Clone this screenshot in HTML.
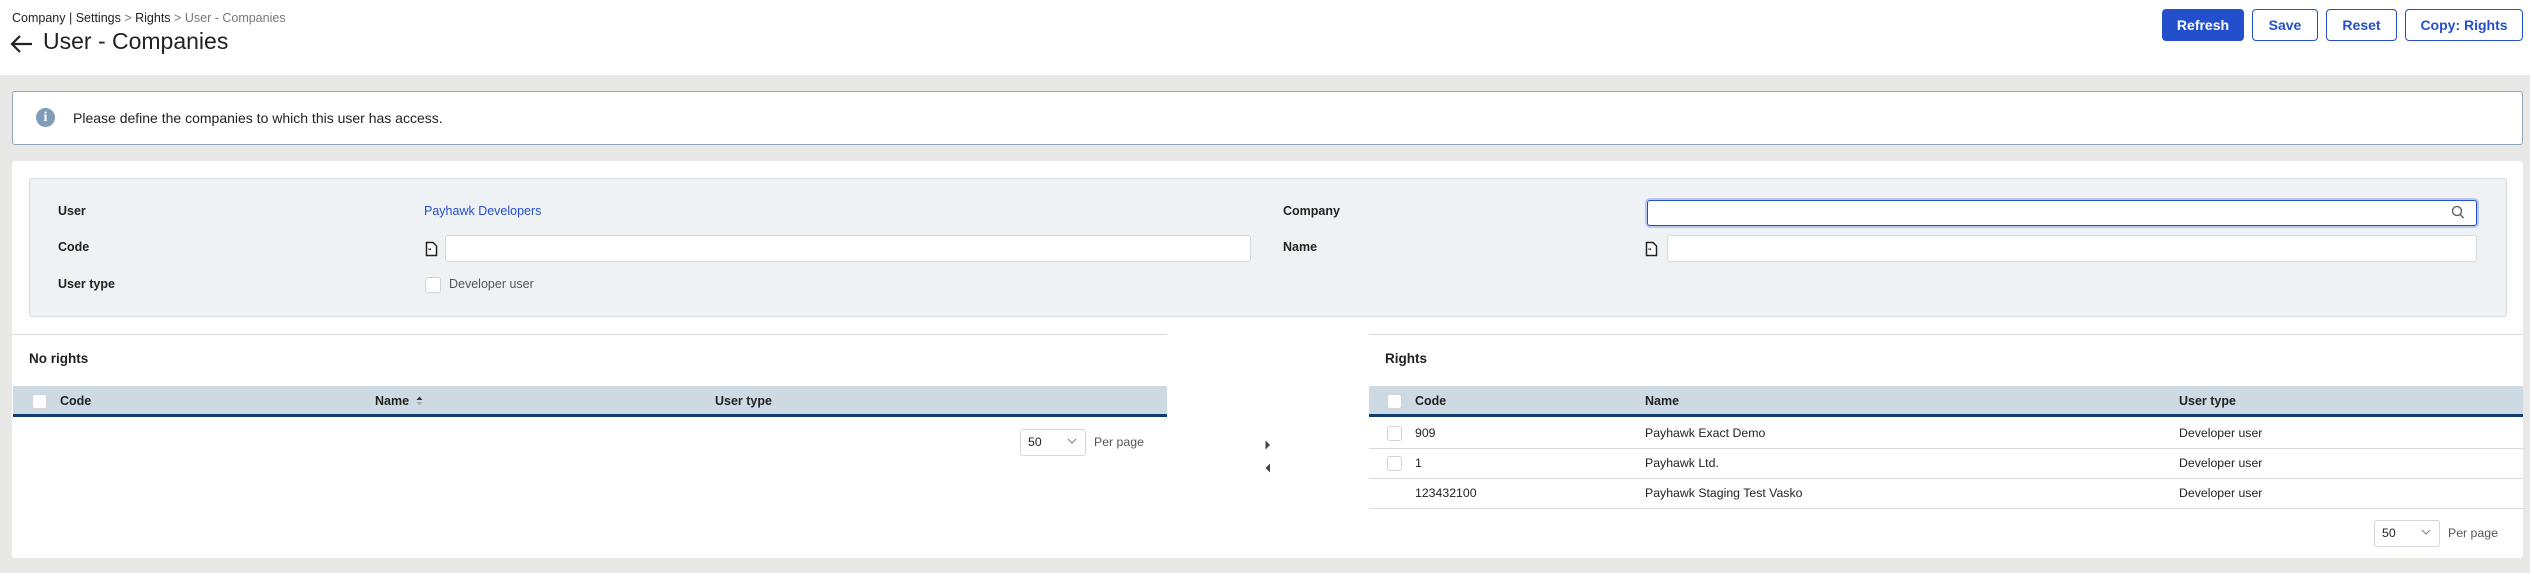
<!DOCTYPE html>
<html><head><meta charset="utf-8">
<style>
*{box-sizing:border-box;margin:0;padding:0}
body{width:2530px;height:573px;overflow:hidden;background:#e8e8e6;font-family:"Liberation Sans",sans-serif;color:#222;position:relative}
.a{position:absolute}
.hdr{left:0;top:0;width:2530px;height:75px;background:#fff}
.btn{position:absolute;top:9px;height:32px;border:1.5px solid #234fcc;border-radius:4px;color:#234fcc;font-size:14px;font-weight:bold;display:flex;align-items:center;justify-content:center;background:#fff}
.lbl{font-size:12.5px;font-weight:bold;color:#222}
.inp{position:absolute;background:#fff;border:1px solid #d3d8dc;border-radius:3px}
.cb{position:absolute;width:15px;height:15px;background:#fff;border:1px solid #cfd4d8;border-radius:3px}
.th{position:absolute;font-size:12.5px;font-weight:bold;color:#222}
.td{position:absolute;font-size:12.3px;color:#222}
.row{position:absolute;height:1px;background:#d6d9dc}
</style></head><body>
<div class="a hdr"></div>
<div class="a" style="left:12px;top:11px;font-size:12.5px;color:#222">Company | Settings <span style="color:#777">&gt;</span> Rights <span style="color:#777">&gt;</span> <span style="color:#777">User - Companies</span></div>
<svg class="a" style="left:10px;top:34px" width="24" height="20" viewBox="0 0 24 20"><path d="M22 10H3M10 2L2 10l8 8" fill="none" stroke="#222" stroke-width="2.2"/></svg>
<div class="a" style="left:43px;top:28px;font-size:23px;color:#222">User - Companies</div>
<div class="btn" style="left:2162px;width:82px;background:#234fcc;color:#fff">Refresh</div>
<div class="btn" style="left:2252px;width:66px">Save</div>
<div class="btn" style="left:2326px;width:71px">Reset</div>
<div class="btn" style="left:2405px;width:118px">Copy: Rights</div>

<div class="a" style="left:12px;top:91px;width:2511px;height:54px;background:#fff;border:1px solid #8fa6bb;border-radius:3px"></div>
<div class="a" style="left:36px;top:108px;width:19px;height:19px;border-radius:50%;background:#7f9cb8;color:#fff;font-weight:bold;font-size:14px;text-align:center;line-height:19px;font-family:'Liberation Serif',serif">i</div>
<div class="a" style="left:73px;top:110px;font-size:14px">Please define the companies to which this user has access.</div>

<div class="a" style="left:12px;top:161px;width:2511px;height:397px;background:#fff;border-radius:3px"></div>
<div class="a" style="left:29px;top:178px;width:2478px;height:139px;background:#eef2f5;border:1px solid #d8dde1;border-radius:3px"></div>
<div class="a lbl" style="left:58px;top:204px">User</div>
<div class="a" style="left:424px;top:204px;font-size:12.5px;color:#234fcc">Payhawk Developers</div>
<div class="a lbl" style="left:58px;top:240px">Code</div>
<svg class="a" style="left:425px;top:241px" width="13" height="16" viewBox="0 0 13 16"><path d="M1.5 1.5h6.5l3.5 3.5v9.5h-10z" fill="#fff" stroke="#222" stroke-width="1.5"/><text x="3" y="12" font-size="7" font-weight="bold" font-family="Liberation Sans">“</text></svg>
<div class="inp" style="left:445px;top:235px;width:806px;height:27px"></div>
<div class="a lbl" style="left:58px;top:277px">User type</div>
<div class="cb" style="left:425px;top:277px;width:16px;height:16px"></div>
<div class="a" style="left:449px;top:277px;font-size:12.5px;color:#555">Developer user</div>

<div class="a lbl" style="left:1283px;top:204px">Company</div>
<div class="a" style="left:1645px;top:198px;width:834px;height:30px;border:3px solid #b9c8ee;border-radius:5px"></div>
<div class="a" style="left:1647px;top:200px;width:830px;height:26px;background:#fff;border:1.5px solid #234fcc;border-radius:3px"></div>
<svg class="a" style="left:2451px;top:205px" width="14" height="15" viewBox="0 0 14 15"><circle cx="6" cy="6" r="4.5" fill="none" stroke="#555" stroke-width="1.3"/><path d="M9.3 9.5L12.5 13" stroke="#555" stroke-width="1.3"/></svg>
<div class="a lbl" style="left:1283px;top:240px">Name</div>
<svg class="a" style="left:1645px;top:241px" width="13" height="16" viewBox="0 0 13 16"><path d="M1.5 1.5h6.5l3.5 3.5v9.5h-10z" fill="#fff" stroke="#222" stroke-width="1.5"/><text x="3" y="12" font-size="7" font-weight="bold" font-family="Liberation Sans">“</text></svg>
<div class="inp" style="left:1667px;top:235px;width:810px;height:27px"></div>

<div class="row" style="left:12px;top:334px;width:1155px"></div>
<div class="row" style="left:1369px;top:334px;width:1154px"></div>

<div class="a" style="left:29px;top:351px;font-size:13.5px;font-weight:bold">No rights</div>
<div class="a" style="left:13px;top:386px;width:1154px;height:31px;background:#cedae3;border-bottom:3px solid #0f3f6e"></div>
<div class="cb" style="left:32px;top:394px"></div>
<div class="th" style="left:60px;top:394px">Code</div>
<div class="th" style="left:375px;top:394px">Name</div>
<svg class="a" style="left:416px;top:396px" width="7" height="10" viewBox="0 0 7 10"><path d="M0.5 4L3.5 0.5 6.5 4z" fill="#333"/><path d="M0.5 6L3.5 9.5 6.5 6z" fill="#aaa"/></svg>
<div class="th" style="left:715px;top:394px">User type</div>
<div class="inp" style="left:1020px;top:429px;width:66px;height:27px"></div>
<div class="td" style="left:1028px;top:435px">50</div>
<svg class="a" style="left:1067px;top:438px" width="10" height="7" viewBox="0 0 10 7"><path d="M1 1l4 4 4-4" fill="none" stroke="#888" stroke-width="1.2"/></svg>
<div class="td" style="left:1094px;top:435px;color:#555">Per page</div>

<svg class="a" style="left:1264px;top:440px" width="8" height="34" viewBox="0 0 8 34"><path d="M1.5 0.5L6 5 1.5 9.5z" fill="#444"/><path d="M6 23.5L1.5 28 6 32.5z" fill="#444"/></svg>

<div class="a" style="left:1385px;top:351px;font-size:13.5px;font-weight:bold">Rights</div>
<div class="a" style="left:1369px;top:386px;width:1154px;height:31px;background:#cedae3;border-bottom:3px solid #0f3f6e"></div>
<div class="cb" style="left:1387px;top:394px"></div>
<div class="th" style="left:1415px;top:394px">Code</div>
<div class="th" style="left:1645px;top:394px">Name</div>
<div class="th" style="left:2179px;top:394px">User type</div>

<div class="cb" style="left:1387px;top:426px"></div>
<div class="td" style="left:1415px;top:426px">909</div>
<div class="td" style="left:1645px;top:426px">Payhawk Exact Demo</div>
<div class="td" style="left:2179px;top:426px">Developer user</div>
<div class="row" style="left:1369px;top:448px;width:1154px"></div>
<div class="cb" style="left:1387px;top:456px"></div>
<div class="td" style="left:1415px;top:456px">1</div>
<div class="td" style="left:1645px;top:456px">Payhawk Ltd.</div>
<div class="td" style="left:2179px;top:456px">Developer user</div>
<div class="row" style="left:1369px;top:478px;width:1154px"></div>
<div class="td" style="left:1415px;top:486px">123432100</div>
<div class="td" style="left:1645px;top:486px">Payhawk Staging Test Vasko</div>
<div class="td" style="left:2179px;top:486px">Developer user</div>
<div class="row" style="left:1369px;top:508px;width:1154px"></div>

<div class="inp" style="left:2374px;top:520px;width:66px;height:27px"></div>
<div class="td" style="left:2382px;top:526px">50</div>
<svg class="a" style="left:2421px;top:529px" width="10" height="7" viewBox="0 0 10 7"><path d="M1 1l4 4 4-4" fill="none" stroke="#888" stroke-width="1.2"/></svg>
<div class="td" style="left:2448px;top:526px;color:#555">Per page</div>
</body></html>
